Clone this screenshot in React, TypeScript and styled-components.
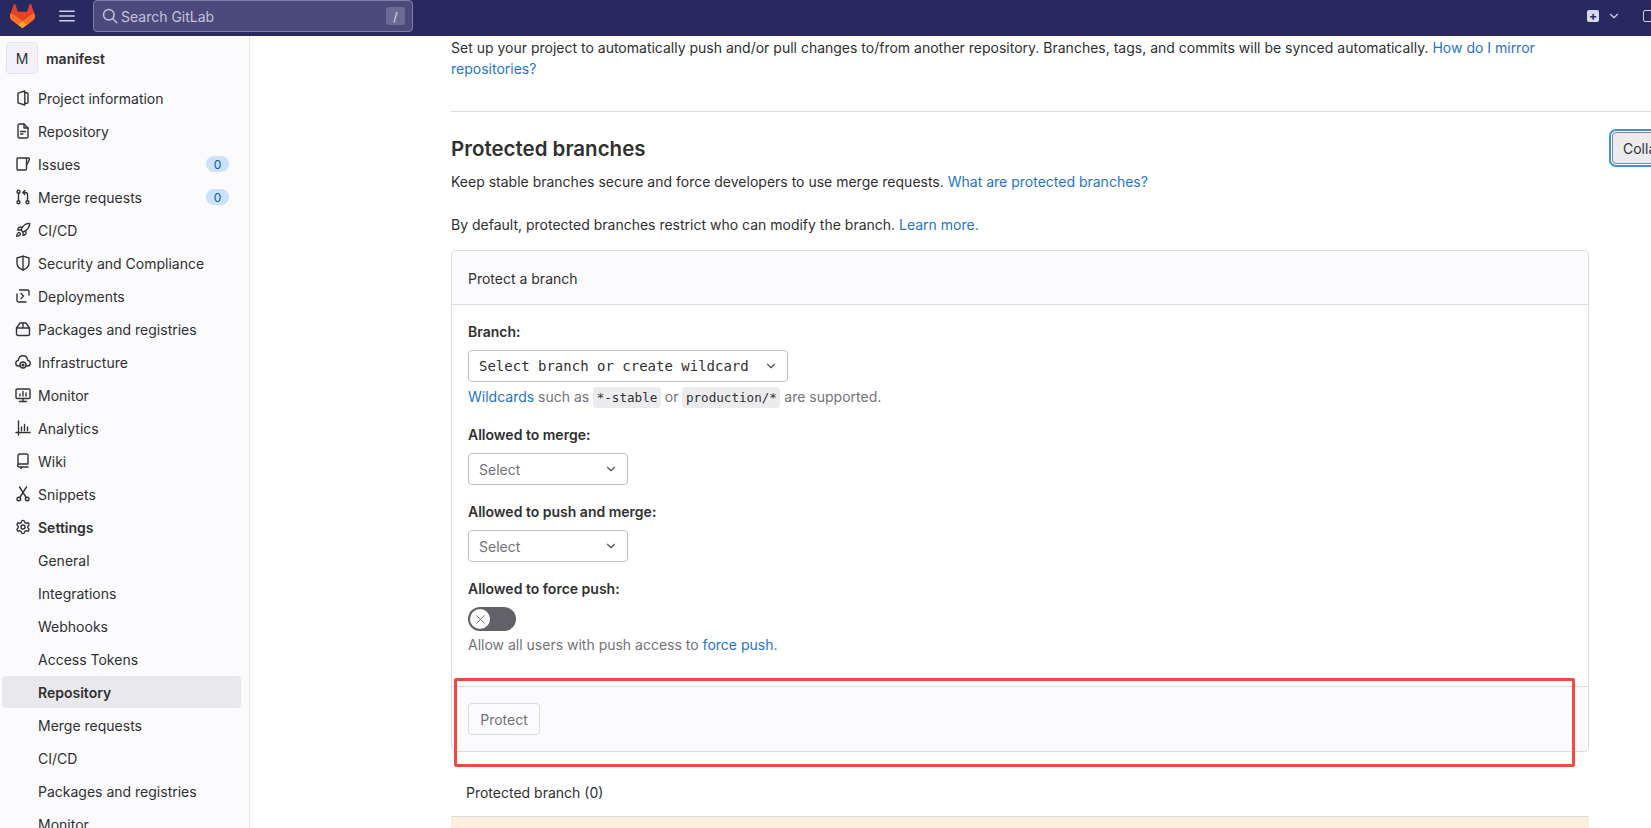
import React from 'react';
import styled, { createGlobalStyle } from 'styled-components';
import { ChevronDown, Rocket, Settings, X } from 'lucide-react';

const GlobalStyle = createGlobalStyle`
  html, body {
    margin: 0;
    padding: 0;
    height: 100%;
    overflow: hidden;
    background: #fff;
    font-family: Inter, "Noto Sans", sans-serif;
    font-size: 14px;
    color: #303030;
  }
  * { box-sizing: border-box; }
`;

const Page = styled.div`
  position: relative;
  width: 1651px;
  height: 828px;
  overflow: hidden;
`;

const Navbar = styled.header`
  display: flex;
  align-items: center;
  height: 40px;
  margin-top: -4px;
  background: #292961;
`;

const LogoWrap = styled.div`
  display: flex;
  margin-left: 10px;
  margin-right: 24px;
`;

const MenuButton = styled.div`
  display: flex;
  color: #d1d0e8;
  margin-right: 18px;
`;

const SearchBox = styled.div`
  display: flex;
  align-items: center;
  width: 320px;
  height: 32px;
  padding: 0 7px 0 8px;
  background: #4c4a7a;
  border: 1px solid #7f7eaa;
  border-radius: 4px;
  color: #c4c3dd;
`;

const SearchText = styled.span`
  flex: 1;
  margin-left: 3px;
  font-size: 14px;
`;

const SlashKey = styled.span`
  display: flex;
  align-items: center;
  justify-content: center;
  width: 19px;
  height: 18px;
  border-radius: 3px;
  background: #6b6a96;
  color: #e1e0f0;
  font-size: 12px;
`;

const NavRight = styled.div`
  display: flex;
  align-items: center;
  margin-left: auto;
  margin-right: -4px;
  color: #d1d0e8;
`;

const NewSquare = styled.div`
  display: flex;
  align-items: center;
  justify-content: center;
  width: 12px;
  height: 12px;
  border-radius: 2px;
  background: #d9d8ec;
  color: #292961;
  font-size: 12px;
  font-weight: 700;
  line-height: 1;
`;

const NavChevron = styled(ChevronDown)`
  margin-left: 8px;
`;

const OutlineSquare = styled.div`
  width: 12px;
  height: 12px;
  margin-left: 22px;
  border: 1.5px solid #d1d0e8;
  border-radius: 2px;
`;

const Layout = styled.div`
  display: flex;
  height: 792px;
`;

const Sidebar = styled.aside`
  flex: 0 0 250px;
  height: 100%;
  overflow: hidden;
  background: #fbfafd;
  border-right: 1px solid #e4e4e8;
`;

const ProjectHeader = styled.div`
  display: flex;
  align-items: center;
  gap: 8px;
  padding: 6px 0 8px 6px;
`;

const Avatar = styled.div`
  display: flex;
  align-items: center;
  justify-content: center;
  width: 32px;
  height: 32px;
  background: #f4f1fb;
  border: 1px solid #e6e4ee;
  border-radius: 4px;
  font-size: 14px;
  color: #333238;
`;

const ProjectName = styled.span`
  font-weight: 600;
  color: #303030;
`;

const NavList = styled.nav`
  display: flex;
  flex-direction: column;
  gap: 1px;
  padding: 0 8px 0 2px;
`;

const NavItem = styled.div<{ $active?: boolean; $strong?: boolean }>`
  display: flex;
  align-items: center;
  flex: 0 0 32px;
  padding: 0 12px 0 13px;
  border-radius: 4px;
  background: ${(p) => (p.$active ? '#e9e8ec' : 'transparent')};
  font-weight: ${(p) => (p.$active || p.$strong ? 600 : 400)};
  color: #303030;
  white-space: nowrap;
`;

const IconSlot = styled.span`
  display: flex;
  flex: 0 0 23px;
  color: #333238;
`;

const SubLabel = styled.span`
  margin-left: 23px;
`;

const Badge = styled.span`
  display: flex;
  align-items: center;
  justify-content: center;
  width: 23px;
  height: 16px;
  margin-left: auto;
  border-radius: 8px;
  background: #cbe2f9;
  color: #0b5cad;
  font-size: 12px;
`;

const Main = styled.main`
  flex: 1;
  min-width: 0;
  overflow: hidden;
  padding-left: 201px;
`;

const Section = styled.div`
  width: 1300px;
`;

const Para = styled.p`
  width: 1138px;
  margin: 0;
  padding-top: 1px;
  line-height: 21px;
`;

const Rule = styled.hr`
  margin: 32px 0 0;
  border: 0;
  border-top: 1px solid #dcdcde;
`;

const SectionHead = styled.div`
  display: flex;
  align-items: center;
  justify-content: space-between;
  width: 1249px;
  height: 32px;
  margin-top: 20px;
`;

const Heading = styled.h2`
  margin: 0;
  padding-top: 1px;
  font-size: 20.5px;
  font-weight: 600;
  color: #303030;
`;

const CollapseButton = styled.button`
  width: 88px;
  height: 32px;
  padding: 0 10px;
  text-align: left;
  font-family: inherit;
  font-size: 14px;
  color: #303030;
  background: #ececef;
  border: 1px solid #89888d;
  border-radius: 4px;
  box-shadow: 0 0 0 1px #fff, 0 0 0 3px #428fdc;
`;

const Text = styled.p<{ $gap: number }>`
  width: 1138px;
  margin: ${(p) => p.$gap}px 0 0;
  line-height: 21px;
`;

const Link = styled.a`
  color: #1f75cb;
  text-decoration: none;
`;

const Card = styled.div`
  width: 1138px;
  margin-top: 15px;
  border: 1px solid #dcdcde;
  border-radius: 4px;
  overflow: hidden;
`;

const CardHeader = styled.div`
  height: 54px;
  padding: 1px 15px 0 16px;
  display: flex;
  align-items: center;
  background: #fbfafd;
  border-bottom: 1px solid #dcdcde;
`;

const CardBody = styled.div`
  height: 381px;
  padding: 16px;
`;

const Group = styled.div`
  margin-bottom: 16px;
`;

const Label = styled.div`
  margin-bottom: 8px;
  line-height: 21px;
  font-weight: 600;
  color: #303030;
`;

const Select = styled.div<{ $wide?: boolean }>`
  display: flex;
  align-items: center;
  justify-content: space-between;
  width: ${(p) => (p.$wide ? 320 : 160)}px;
  height: 32px;
  padding: 0 9px 0 10px;
  background: #fff;
  border: 1px solid #bfbfc3;
  border-radius: 4px;
  color: ${(p) => (p.$wide ? '#303030' : '#737278')};
  font-family: ${(p) => (p.$wide ? '"DejaVu Sans Mono", monospace' : 'inherit')};
  font-size: 14px;
`;

const Hint = styled.div<{ $top: number }>`
  margin-top: ${(p) => p.$top}px;
  line-height: 21px;
  color: #737278;
`;

const Code = styled.code`
  display: inline-block;
  height: 21px;
  padding: 0 3.5px;
  line-height: 21px;
  border-radius: 4px;
  background: #ececef;
  color: #303030;
  font-family: "DejaVu Sans Mono", monospace;
  font-size: 12.6px;
`;

const Toggle = styled.div`
  display: flex;
  align-items: center;
  width: 48px;
  height: 24px;
  padding-left: 2px;
  border-radius: 12px;
  background: #626168;
`;

const Knob = styled.span`
  display: flex;
  align-items: center;
  justify-content: center;
  width: 20px;
  height: 20px;
  border-radius: 50%;
  background: #fff;
  color: #737278;
`;

const CardFooter = styled.div`
  padding: 16px 15px 16px 16px;
  background: #fbfafd;
  border-top: 1px solid #dcdcde;
`;

const ProtectButton = styled.button`
  display: block;
  width: 72px;
  height: 32px;
  padding: 0;
  font-family: inherit;
  font-size: 14px;
  color: #737278;
  background: #fbfafd;
  border: 1px solid #dcdcde;
  border-radius: 4px;
`;

const TableTitle = styled.div`
  margin-top: 30px;
  padding-left: 15px;
  line-height: 21px;
  color: #303030;
`;

const WarningBar = styled.div`
  width: 1138px;
  height: 20px;
  margin-top: 13px;
  background: #fdf1dd;
  border-top: 1px solid #dcdcde;
`;

const Annotation = styled.div`
  position: absolute;
  left: 454px;
  top: 678px;
  width: 1121px;
  height: 89px;
  border: 3px solid #f44a3e;
  border-radius: 2px;
  pointer-events: none;
`;

const Icon: React.FC<{ children: React.ReactNode }> = ({ children }) => (
  <svg width="16" height="16" viewBox="0 0 16 16" fill="none" stroke="currentColor" strokeWidth="1.4" strokeLinecap="round" strokeLinejoin="round">
    {children}
  </svg>
);

const icons: Record<string, React.ReactNode> = {
  project: (
    <Icon>
      <path d="M3 3.200 9.800 1v14L3 12.800Z" />
      <path d="M9.800 2.800H12a1 1 0 0 1 1 1v8.400a1 1 0 0 1-1 1H9.800" />
    </Icon>
  ),
  doc: (
    <Icon>
      <path d="M3 2.500A1.500 1.500 0 0 1 4.500 1H9l4 4v8.500a1.500 1.500 0 0 1-1.500 1.500h-7A1.500 1.500 0 0 1 3 13.500Z" />
      <path d="M9 1v4h4M5.500 8.500h5M5.500 11h2.500" />
    </Icon>
  ),
  issues: (
    <Icon>
      <path d="M3 2h10.500a1 1 0 0 1 .9 1.400L11.500 9.500V13a1 1 0 0 1-1 1H3a1 1 0 0 1-1-1V3a1 1 0 0 1 1-1Z" />
      <path d="M11.500 2.500v7" />
    </Icon>
  ),
  merge: (
    <Icon>
      <circle cx="3.500" cy="2.800" r="1.500" />
      <circle cx="3.500" cy="13.200" r="1.500" />
      <circle cx="12.500" cy="13.200" r="1.500" />
      <path d="M3.500 4.300v7.400M12.500 11.700V5.500a2 2 0 0 0-2-2H8M9.800 1.500 7.800 3.500l2 2" />
    </Icon>
  ),
  rocket: <Rocket size={16} strokeWidth={2.1} />,
  shield: (
    <Icon>
      <path d="M8 1.200 14 3v5c0 3.500-2.500 5.800-6 7-3.500-1.200-6-3.500-6-7V3Z" />
      <path d="M8 1.200V15" />
    </Icon>
  ),
  deploy: (
    <Icon>
      <path d="M4.500 2h8A1.500 1.500 0 0 1 14 3.500V7" />
      <path d="M2 6v6.500A1.500 1.500 0 0 0 3.500 14H11" />
      <path d="M6 5.500 8.500 8 6 10.500" />
    </Icon>
  ),
  pack: (
    <Icon>
      <path d="M5 2h6l3.500 5v6a1.500 1.500 0 0 1-1.500 1.500H3A1.500 1.500 0 0 1 1.500 13V7Z" />
      <path d="M1.500 7h13M8 2v5" />
    </Icon>
  ),
  infra: (
    <Icon>
      <path d="M5 12H3.500C1.800 12 .8 10.500 .8 9.200 .8 7.600 2 6.600 3.300 6.400 3.700 3.600 5.700 1.800 8 1.800s4.300 1.800 4.700 4.600c1.300.2 2.500 1.200 2.500 2.800 0 1.300-1 2.800-2.700 2.800H11" />
      <circle cx="8" cy="11" r="3" />
      <circle cx="8" cy="11" r=".8" />
    </Icon>
  ),
  monitor: (
    <Icon>
      <rect x="1" y="2" width="14" height="9.500" rx="1" />
      <path d="M8 11.500V14.500M4.500 14.500h7M5 9V7M8 9V4.500M11 9V6" />
    </Icon>
  ),
  chart: (
    <Icon>
      <path d="M3.500 1v14M1 12.500h14M6.500 10.500V7M9.500 10.500V4.500M12.500 10.500V7" />
    </Icon>
  ),
  book: (
    <Icon>
      <path d="M3 12V2.500A1.500 1.500 0 0 1 4.500 1h7A1.500 1.500 0 0 1 13 2.500V11H4a1.500 1.500 0 0 0 0 3h9" />
      <path d="M6 14v1.500" />
    </Icon>
  ),
  snippets: (
    <Icon>
      <circle cx="3.800" cy="13" r="1.800" />
      <circle cx="12.200" cy="13" r="1.800" />
      <path d="M4.800 11.500 11.500 1M11.200 11.500 4.500 1" />
    </Icon>
  ),
  settings: <Settings size={16} strokeWidth={2.1} />,
};

const topItems: { label: string; icon: string; count?: number }[] = [
  { label: 'Project information', icon: 'project' },
  { label: 'Repository', icon: 'doc' },
  { label: 'Issues', icon: 'issues', count: 0 },
  { label: 'Merge requests', icon: 'merge', count: 0 },
  { label: 'CI/CD', icon: 'rocket' },
  { label: 'Security and Compliance', icon: 'shield' },
  { label: 'Deployments', icon: 'deploy' },
  { label: 'Packages and registries', icon: 'pack' },
  { label: 'Infrastructure', icon: 'infra' },
  { label: 'Monitor', icon: 'monitor' },
  { label: 'Analytics', icon: 'chart' },
  { label: 'Wiki', icon: 'book' },
  { label: 'Snippets', icon: 'snippets' },
];

const settingsItems = [
  'General',
  'Integrations',
  'Webhooks',
  'Access Tokens',
  'Repository',
  'Merge requests',
  'CI/CD',
  'Packages and registries',
  'Monitor',
];

const App: React.FC = () => {
  return (
    <Page>
      <GlobalStyle />
      <Navbar>
        <LogoWrap>
          <svg width="25" height="24" viewBox="0 0 25 24">
            <path fill="#E24329" d="m24.507 9.5-.034-.09L21.082.562a.896.896 0 0 0-1.694.091l-2.29 7.01H7.825L5.535.653a.898.898 0 0 0-1.694-.09L.451 9.411.416 9.5a6.297 6.297 0 0 0 2.09 7.278l.012.01.03.022 5.16 3.867 2.56 1.935 1.554 1.176a1.051 1.051 0 0 0 1.268 0l1.555-1.176 2.56-1.935 5.197-3.89.014-.01A6.297 6.297 0 0 0 24.507 9.5Z" />
            <path fill="#FC6D26" d="m24.507 9.5-.034-.09a11.44 11.44 0 0 0-4.56 2.051l-7.447 5.632 4.742 3.584 5.197-3.89.014-.01A6.297 6.297 0 0 0 24.507 9.5Z" />
            <path fill="#FCA326" d="m7.707 20.677 2.56 1.935 1.555 1.176a1.051 1.051 0 0 0 1.268 0l1.555-1.176 2.56-1.935-4.743-3.584-4.755 3.584Z" />
            <path fill="#FC6D26" d="M5.01 11.461a11.43 11.43 0 0 0-4.56-2.05L.416 9.5a6.297 6.297 0 0 0 2.09 7.278l.012.01.03.022 5.16 3.867 4.745-3.584-7.444-5.632Z" />
          </svg>
        </LogoWrap>
        <MenuButton>
          <svg width="16" height="16" viewBox="0 0 16 16" stroke="currentColor" strokeWidth="1.5" strokeLinecap="round">
            <path d="M.8 3.300h14.400M.8 8h14.400M.8 12.700h14.400" />
          </svg>
        </MenuButton>
        <SearchBox>
          <svg width="16" height="16" viewBox="0 0 16 16" fill="none" stroke="currentColor" strokeWidth="1.5" strokeLinecap="round">
            <circle cx="6.800" cy="6.800" r="5.300" />
            <path d="m10.800 10.800 4 4" />
          </svg>
          <SearchText>Search GitLab</SearchText>
          <SlashKey>/</SlashKey>
        </SearchBox>
        <NavRight>
          <NewSquare>+</NewSquare>
          <NavChevron size={14} strokeWidth={2} />
          <OutlineSquare />
        </NavRight>
      </Navbar>
      <Layout>
        <Sidebar>
          <ProjectHeader>
            <Avatar>M</Avatar>
            <ProjectName>manifest</ProjectName>
          </ProjectHeader>
          <NavList>
            {topItems.map((item) => (
              <NavItem key={item.label}>
                <IconSlot>{icons[item.icon]}</IconSlot>
                {item.label}
                {item.count !== undefined && <Badge>{item.count}</Badge>}
              </NavItem>
            ))}
            <NavItem $strong>
              <IconSlot>{icons.settings}</IconSlot>
              Settings
            </NavItem>
            {settingsItems.map((label, i) => (
              <NavItem key={label + i} $active={i === 4}>
                <SubLabel>{label}</SubLabel>
              </NavItem>
            ))}
          </NavList>
        </Sidebar>
        <Main>
          <Section>
            <Para>
              Set up your project to automatically push and/or pull changes to/from another repository. Branches, tags, and commits will be synced automatically.{' '}
              <Link>How do I mirror repositories?</Link>
            </Para>
            <Rule />
            <SectionHead>
              <Heading>Protected branches</Heading>
              <CollapseButton>Collapse</CollapseButton>
            </SectionHead>
            <Text $gap={7}>
              Keep stable branches secure and force developers to use merge requests. <Link>What are protected branches?</Link>
            </Text>
            <Text $gap={22}>
              By default, protected branches restrict who can modify the branch. <Link>Learn more.</Link>
            </Text>
            <Card>
              <CardHeader>Protect a branch</CardHeader>
              <CardBody>
                <Group>
                  <Label>Branch:</Label>
                  <Select $wide>
                    Select branch or create wildcard
                    <ChevronDown size={14} color="#535158" />
                  </Select>
                  <Hint $top={4}>
                    <Link>Wildcards</Link> such as <Code>*-stable</Code> or <Code>production/*</Code> are supported.
                  </Hint>
                </Group>
                <Group>
                  <Label>Allowed to merge:</Label>
                  <Select>
                    Select
                    <ChevronDown size={14} color="#535158" />
                  </Select>
                </Group>
                <Group>
                  <Label>Allowed to push and merge:</Label>
                  <Select>
                    Select
                    <ChevronDown size={14} color="#535158" />
                  </Select>
                </Group>
                <Label>Allowed to force push:</Label>
                <Toggle>
                  <Knob>
                    <X size={15} strokeWidth={1.6} />
                  </Knob>
                </Toggle>
                <Hint $top={3}>
                  Allow all users with push access to <Link>force push.</Link>
                </Hint>
              </CardBody>
              <CardFooter>
                <ProtectButton>Protect</ProtectButton>
              </CardFooter>
            </Card>
            <TableTitle>Protected branch (0)</TableTitle>
            <WarningBar />
          </Section>
        </Main>
      </Layout>
      <Annotation />
    </Page>
  );
};

export default App;
